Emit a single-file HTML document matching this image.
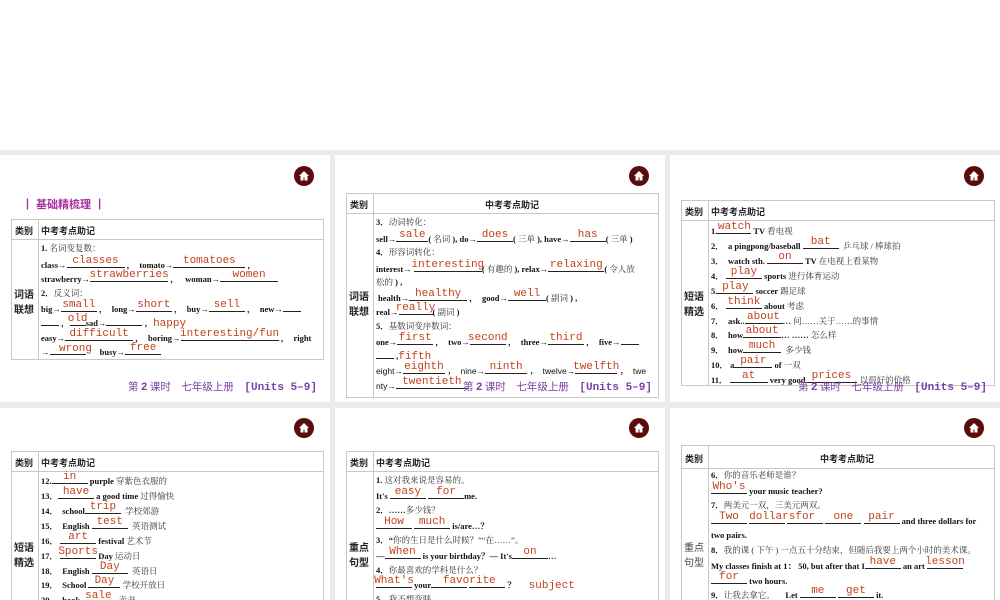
<!DOCTYPE html>
<html><head><meta charset="utf-8"><style>
body{margin:0;width:1000px;height:600px;background:#ebebeb;position:relative;overflow:hidden}
.top{position:absolute;left:0;top:0;width:1000px;height:150px;background:#fff}
.p{position:absolute;background:#fff;overflow:hidden;width:330px}
.home{position:absolute;width:20px;height:20px;border-radius:50%;background:#5a0c0c}
.home svg{position:absolute;left:4px;top:4px}
.t{position:absolute;border:1px solid #c8c8c8;box-sizing:border-box}
.t .h{position:absolute;left:0;right:0;top:0;border-bottom:1px solid #c8c8c8}
.t .v{position:absolute;top:0;bottom:0;width:0;border-left:1px solid #c8c8c8}
.hd{position:absolute;font:bold 9px "Liberation Sans","Noto Sans CJK SC",sans-serif;color:#222;white-space:nowrap}
.lab{position:absolute;font:bold 10px "Noto Sans CJK SC",sans-serif;line-height:15px;color:#222;width:26px;text-align:center}
.ln{position:absolute;white-space:nowrap;font:bold 8.5px "Liberation Serif","Noto Serif CJK SC",serif;color:#111;line-height:12px}
.c{font-weight:normal;color:#333}
.b{display:inline-block;border-bottom:1px solid #222;height:9px;position:relative;vertical-align:baseline}
.b i{position:absolute;left:-4px;right:-4px;bottom:1px;text-align:center;font:normal 11px "Liberation Mono",monospace;color:#c2411c;font-style:normal;line-height:10px;white-space:nowrap}
.ft{position:absolute;right:13px;font:10.5px "Noto Sans CJK SC",sans-serif;color:#7a3fa8;white-space:nowrap}
.ft b{font-family:"Liberation Mono",monospace;font-weight:bold;font-size:11px}
</style></head><body>
<div class="top"></div>

<!-- P1 -->
<div class="p" style="left:0;top:155px;height:247px">
<div class="home" style="left:294px;top:11px"><svg width="12" height="12" viewBox="0 0 12 12"><path d="M6 1L1 6h1.5v4.5h3v-3h1v3h3V6H11z" fill="#fff"/></svg></div>
<div class="hd" style="left:22px;top:41px;font-size:11px;color:#a8309e">┃ 基础精梳理 ┃</div>
<div class="t" style="left:11px;top:64px;width:313px;height:141px"><div class="h" style="height:19px"></div><div class="v" style="left:26px"></div></div>
<div class="hd" style="left:15px;top:69px">类别</div><div class="hd" style="left:41px;top:69px">中考考点助记</div>
<div class="lab" style="left:11px;top:131px">词语<br>联想</div>
<div class="ln" style="left:41px;top:87px">1. <span class="c">名词变复数：</span></div>
<div class="ln" style="left:41px;top:103px">class→<span class="b" style="width:58px"><i>classes</i></span> ，&nbsp; tomato→<span class="b" style="width:72px"><i>tomatoes</i></span> ，</div>
<div class="ln" style="left:41px;top:117px">strawberry→<span class="b" style="width:78px"><i>strawberries</i></span> ，&nbsp;&nbsp; woman→<span class="b" style="width:58px"><i>women</i></span></div>
<div class="ln" style="left:41px;top:132px">2．<span class="c">反义词：</span></div>
<div class="ln" style="left:41px;top:147px">big→<span class="b" style="width:36px"><i>small</i></span> ，&nbsp; long→<span class="b" style="width:36px"><i>short</i></span> ，&nbsp; buy→<span class="b" style="width:36px"><i>sell</i></span> ，&nbsp; new→<span class="b" style="width:18px"></span></div>
<div class="ln" style="left:41px;top:161px"><span class="b" style="width:18px"></span> ，<span class="b" style="width:16px"><i>old</i></span>sad→<span class="b" style="width:36px"></span> ，<span style="font:11px 'Liberation Mono',monospace;color:#c2411c;font-weight:normal">happy</span></div>
<div class="ln" style="left:41px;top:176px">easy→<span class="b" style="width:68px"><i>difficult</i></span> ，&nbsp; boring→<span class="b" style="width:98px"><i>interesting/fun</i></span> ，&nbsp; right</div>
<div class="ln" style="left:41px;top:190px">→<span class="b" style="width:36px"></span><span class="b" style="width:12px;border:0"><i style="left:-40px;right:-8px">wrong</i></span> busy→<span class="b" style="width:36px"><i>free</i></span></div>
<div class="ft" style="top:224px">第 <b>2</b> 课时　七年级上册　<b>[Units 5–9]</b></div>
</div>

<!-- P2 -->
<div class="p" style="left:335px;top:155px;height:247px">
<div class="home" style="left:294px;top:11px"><svg width="12" height="12" viewBox="0 0 12 12"><path d="M6 1L1 6h1.5v4.5h3v-3h1v3h3V6H11z" fill="#fff"/></svg></div>
<div class="t" style="left:11px;top:38px;width:313px;height:205px"><div class="h" style="height:19px"></div><div class="v" style="left:26px"></div></div>
<div class="hd" style="left:15px;top:43px">类别</div><div class="hd" style="left:150px;top:43px">中考考点助记</div>
<div class="lab" style="left:11px;top:133px">词语<br>联想</div>
<div class="ln" style="left:41px;top:61px">3．<span class="c">动词转化：</span></div>
<div class="ln" style="left:41px;top:77px">sell→<span class="b" style="width:32px"><i>sale</i></span>( <span class="c">名词</span> ), do→<span class="b" style="width:36px"><i>does</i></span>( <span class="c">三单</span> ), have→<span class="b" style="width:36px"><i>has</i></span>( <span class="c">三单</span> )</div>
<div class="ln" style="left:41px;top:91px">4．<span class="c">形容词转化：</span></div>
<div class="ln" style="left:41px;top:107px">interest→ <span class="b" style="width:68px"><i>interesting</i></span>( <span class="c">有趣的</span> ), relax→<span class="b" style="width:56px"><i>relaxing</i></span>( <span class="c">令人放</span></div>
<div class="ln" style="left:41px;top:121px"><span class="c">松的</span> ) ,</div>
<div class="ln" style="left:43px;top:136px">health→<span class="b" style="width:58px"><i>healthy</i></span> ，&nbsp; good→<span class="b" style="width:38px"><i>well</i></span>( <span class="c">副词</span> ) ,</div>
<div class="ln" style="left:41px;top:150px">real→<span class="b" style="width:34px"><i>really</i></span>( <span class="c">副词</span> )</div>
<div class="ln" style="left:41px;top:165px">5．<span class="c">基数词变序数词：</span></div>
<div class="ln" style="left:41px;top:180px">one→<span class="b" style="width:36px"><i>first</i></span> ，&nbsp; two→<span class="b" style="width:36px"><i>second</i></span> ，&nbsp; three→<span class="b" style="width:36px"><i>third</i></span> ，&nbsp; five→<span class="b" style="width:18px"></span></div>
<div class="ln" style="left:41px;top:194px"><span class="b" style="width:18px"></span> ,<span style="font:11px 'Liberation Mono',monospace;color:#c2411c;font-weight:normal">fifth</span></div>
<div class="ln" style="left:41px;top:209px;font-family:'Liberation Sans',sans-serif;font-weight:normal">eight→<span class="b" style="width:42px"><i>eighth</i></span> ，&nbsp; nine→<span class="b" style="width:42px"><i>ninth</i></span> ，&nbsp; twelve→<span class="b" style="width:42px"><i>twelfth</i></span> ，&nbsp; twe</div>
<div class="ln" style="left:41px;top:224px;font-family:'Liberation Sans',sans-serif;font-weight:normal">nty→<span class="b" style="width:72px"><i>twentieth</i></span></div>
<div class="ft" style="top:224px">第 <b>2</b> 课时　七年级上册　<b>[Units 5–9]</b></div>
</div>

<!-- P3 -->
<div class="p" style="left:670px;top:155px;height:247px">
<div class="home" style="left:294px;top:11px"><svg width="12" height="12" viewBox="0 0 12 12"><path d="M6 1L1 6h1.5v4.5h3v-3h1v3h3V6H11z" fill="#fff"/></svg></div>
<div class="t" style="left:11px;top:45px;width:314px;height:186px"><div class="h" style="height:19px"></div><div class="v" style="left:26px"></div></div>
<div class="hd" style="left:15px;top:50px">类别</div><div class="hd" style="left:41px;top:50px">中考考点助记</div>
<div class="lab" style="left:11px;top:133px">短语<br>精选</div>
<div class="ln" style="left:41px;top:69px">1.<span class="b" style="width:34px"><i>watch</i></span> TV <span class="c">看电视</span></div>
<div class="ln" style="left:41px;top:84px">2．&nbsp; a pingpong/baseball <span class="b" style="width:36px"><i>bat</i></span>&nbsp; <span class="c">乒乓球 / 棒球拍</span></div>
<div class="ln" style="left:41px;top:99px">3．&nbsp; watch sth. <span class="b" style="width:36px"><i>on</i></span> TV <span class="c">在电视上看某物</span></div>
<div class="ln" style="left:41px;top:114px">4．&nbsp;<span class="b" style="width:36px"><i>play</i></span> sports <span class="c">进行体育运动</span></div>
<div class="ln" style="left:41px;top:129px">5.<span class="b" style="width:36px"><i>play</i></span> soccer <span class="c">踢足球</span></div>
<div class="ln" style="left:41px;top:144px">6．&nbsp;<span class="b" style="width:36px"><i>think</i></span> about <span class="c">考虑</span></div>
<div class="ln" style="left:41px;top:159px">7．&nbsp; ask..<span class="b" style="width:38px"><i>about</i></span>… <span class="c">问……关于……的事情</span></div>
<div class="ln" style="left:41px;top:173px">8．&nbsp; how<span class="b" style="width:38px"><i>about</i></span>… …… <span class="c">怎么样</span></div>
<div class="ln" style="left:41px;top:188px">9．&nbsp; how<span class="b" style="width:38px"><i>much</i></span>&nbsp; <span class="c">多少钱</span></div>
<div class="ln" style="left:41px;top:203px">10．&nbsp;a<span class="b" style="width:38px"><i>pair</i></span> of <span class="c">一双</span></div>
<div class="ln" style="left:41px;top:218px">11．&nbsp;<span class="b" style="width:38px"><i>at</i></span> very good<span class="b" style="width:52px"><i>prices</i></span> <span class="c">以很好的价格</span></div>
<div class="ft" style="top:224px">第 <b>2</b> 课时　七年级上册　<b>[Units 5–9]</b></div>
</div>

<!-- P4 -->
<div class="p" style="left:0;top:408px;height:192px">
<div class="home" style="left:294px;top:10px"><svg width="12" height="12" viewBox="0 0 12 12"><path d="M6 1L1 6h1.5v4.5h3v-3h1v3h3V6H11z" fill="#fff"/></svg></div>
<div class="t" style="left:11px;top:43px;width:313px;height:160px"><div class="h" style="height:19px"></div><div class="v" style="left:26px"></div></div>
<div class="hd" style="left:15px;top:48px">类别</div><div class="hd" style="left:41px;top:48px">中考考点助记</div>
<div class="lab" style="left:11px;top:131px">短语<br>精选</div>
<div class="ln" style="left:41px;top:66px">12.<span class="b" style="width:36px"><i>in</i></span> purple <span class="c">穿紫色衣服的</span></div>
<div class="ln" style="left:41px;top:81px">13．<span class="b" style="width:36px"><i>have</i></span> a good time <span class="c">过得愉快</span></div>
<div class="ln" style="left:41px;top:96px">14．&nbsp; school<span class="b" style="width:36px"><i>trip</i></span>&nbsp; <span class="c">学校郊游</span></div>
<div class="ln" style="left:41px;top:111px">15．&nbsp; English <span class="b" style="width:36px"><i>test</i></span>&nbsp; <span class="c">英语测试</span></div>
<div class="ln" style="left:41px;top:126px">16．&nbsp;<span class="b" style="width:36px"><i>art</i></span> festival <span class="c">艺术节</span></div>
<div class="ln" style="left:41px;top:141px">17．&nbsp;<span class="b" style="width:36px"><i>Sports</i></span> Day <span class="c">运动日</span></div>
<div class="ln" style="left:41px;top:156px">18．&nbsp; English <span class="b" style="width:36px"><i>Day</i></span>&nbsp; <span class="c">英语日</span></div>
<div class="ln" style="left:41px;top:170px">19．&nbsp; School <span class="b" style="width:32px"><i>Day</i></span> <span class="c">学校开放日</span></div>
<div class="ln" style="left:41px;top:185px">20．&nbsp; book <span class="b" style="width:32px"><i>sale</i></span>&nbsp; <span class="c">卖书</span></div>
</div>

<!-- P5 -->
<div class="p" style="left:335px;top:408px;height:192px">
<div class="home" style="left:294px;top:10px"><svg width="12" height="12" viewBox="0 0 12 12"><path d="M6 1L1 6h1.5v4.5h3v-3h1v3h3V6H11z" fill="#fff"/></svg></div>
<div class="t" style="left:11px;top:43px;width:313px;height:160px"><div class="h" style="height:19px"></div><div class="v" style="left:26px"></div></div>
<div class="hd" style="left:15px;top:48px">类别</div><div class="hd" style="left:41px;top:48px">中考考点助记</div>
<div class="lab" style="left:11px;top:131px">重点<br>句型</div>
<div class="ln" style="left:41px;top:66px">1. <span class="c">这对我来说是容易的。</span></div>
<div class="ln" style="left:41px;top:81px">It's <span class="b" style="width:36px"><i>easy</i></span> <span class="b" style="width:36px"><i>for</i></span>me.</div>
<div class="ln" style="left:41px;top:96px">2．……<span class="c">多少钱？</span></div>
<div class="ln" style="left:41px;top:111px"><span class="b" style="width:36px"><i>How</i></span> <span class="b" style="width:36px"><i>much</i></span> is/are…？</div>
<div class="ln" style="left:41px;top:126px">3．“<span class="c">你的生日是什么时候？”“在……”。</span></div>
<div class="ln" style="left:41px;top:141px">—<span class="b" style="width:36px"><i>When</i></span> is your birthday？— It's<span class="b" style="width:36px"><i>on</i></span>…</div>
<div class="ln" style="left:41px;top:156px">4．<span class="c">你最喜欢的学科是什么？</span></div>
<div class="ln" style="left:41px;top:170px"><span class="b" style="width:36px"><i>What's</i></span> your<span class="b" style="width:36px"></span> <span class="b" style="width:36px"><i style="left:-40px">favorite</i></span> ？ &nbsp;&nbsp;&nbsp;&nbsp;&nbsp;<span style="font:11px 'Liberation Mono',monospace;color:#c2411c;font-weight:normal">subject</span></div>
<div class="ln" style="left:41px;top:185px">5．<span class="c">我不想变胖。</span></div>
</div>

<!-- P6 -->
<div class="p" style="left:670px;top:408px;height:192px">
<div class="home" style="left:294px;top:10px"><svg width="12" height="12" viewBox="0 0 12 12"><path d="M6 1L1 6h1.5v4.5h3v-3h1v3h3V6H11z" fill="#fff"/></svg></div>
<div class="t" style="left:11px;top:37px;width:314px;height:170px"><div class="h" style="height:22px"></div><div class="v" style="left:26px"></div></div>
<div class="hd" style="left:15px;top:44px">类别</div><div class="hd" style="left:150px;top:44px">中考考点助记</div>
<div class="lab" style="left:11px;top:131px;font-weight:normal;color:#444">重点<br>句型</div>
<div class="ln" style="left:41px;top:61px">6．<span class="c">你的音乐老师是谁？</span></div>
<div class="ln" style="left:41px;top:76px"><span class="b" style="width:36px"><i>Who's</i></span> your music teacher?</div>
<div class="ln" style="left:41px;top:91px">7．<span class="c">两美元一双，三美元两双。</span></div>
<div class="ln" style="left:41px;top:106px"><span class="b" style="width:36px"><i>Two</i></span> <span class="b" style="width:36px"><i style="left:0;right:-30px;text-align:left">dollars</i></span> <span class="b" style="width:36px"><i>for</i></span> <span class="b" style="width:36px"><i>one</i></span> <span class="b" style="width:36px"><i>pair</i></span> and three dollars for</div>
<div class="ln" style="left:41px;top:121px">two pairs.</div>
<div class="ln" style="left:41px;top:136px">8．<span class="c">我的课 ( 下午 ) 一点五十分结束，但随后我要上两个小时的美术课。</span></div>
<div class="ln" style="left:41px;top:151px">My classes finish at 1： 50, but after that I<span class="b" style="width:36px"><i>have</i></span> an art <span class="b" style="width:36px"><i>lesson</i></span></div>
<div class="ln" style="left:41px;top:166px"><span class="b" style="width:36px"><i>for</i></span> two hours.</div>
<div class="ln" style="left:41px;top:180px">9．<span class="c">让我去拿它。</span> &nbsp;&nbsp;&nbsp; Let <span class="b" style="width:36px"><i>me</i></span> <span class="b" style="width:36px"><i>get</i></span> it.</div>
</div>
</body></html>
